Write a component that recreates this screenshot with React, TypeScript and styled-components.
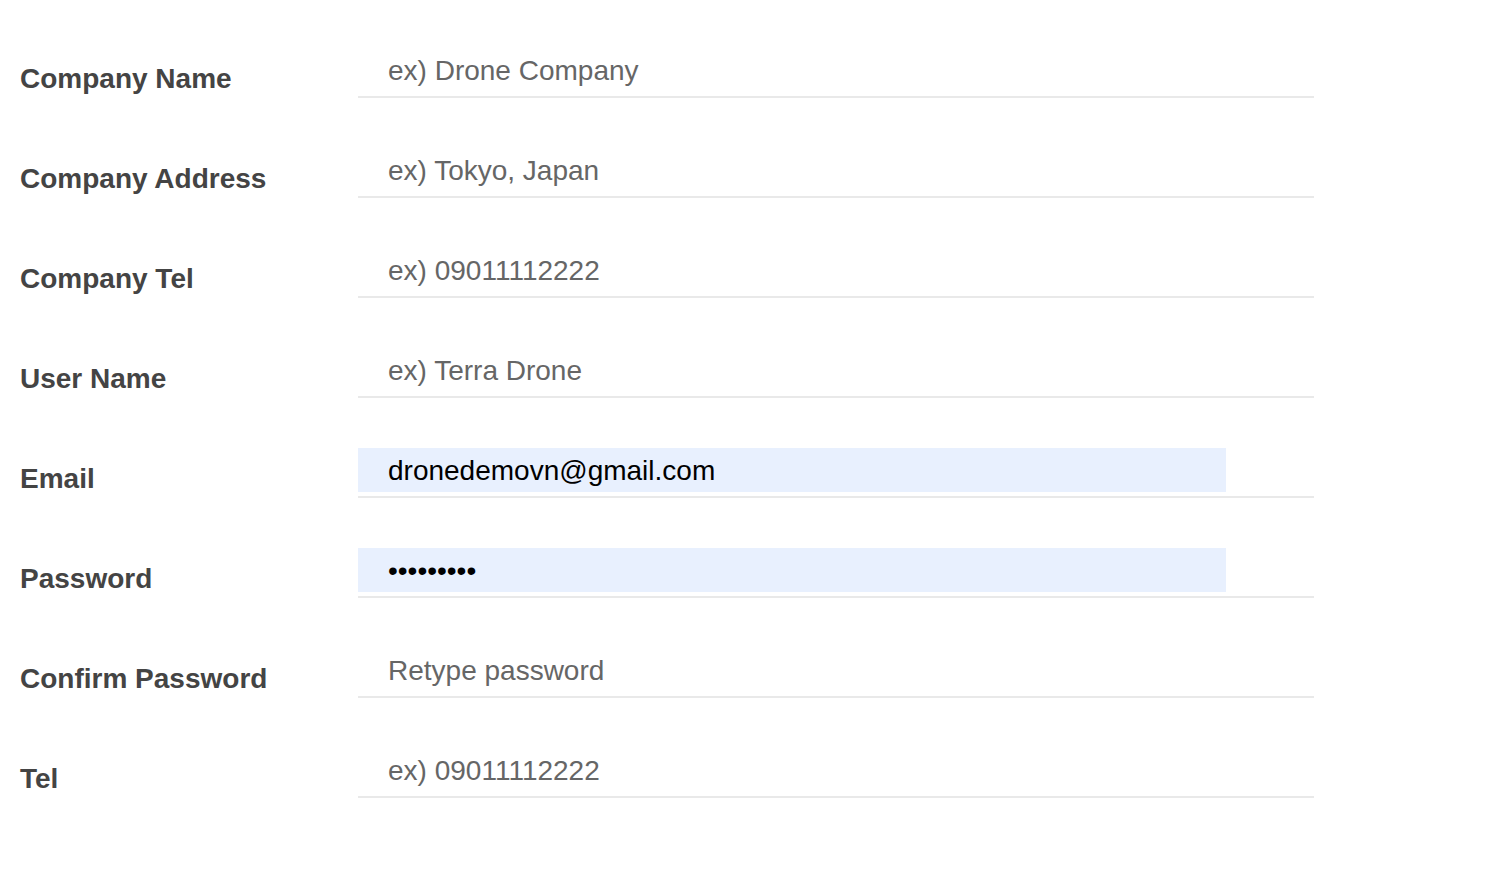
import React, { ReactElement } from 'react';
import styled, { createGlobalStyle } from 'styled-components';

const GlobalStyle = createGlobalStyle`
  html, body {
    margin: 0;
    padding: 0;
    background: #ffffff;
  }
  body {
    font-family: "Liberation Sans", Arial, sans-serif;
  }
`;

interface Field {
  label: string;
  type?: string;
  placeholder?: string;
  value?: string;
}

const fields: Field[] = [
  { label: 'Company Name', placeholder: 'ex) Drone Company' },
  { label: 'Company Address', placeholder: 'ex) Tokyo, Japan' },
  { label: 'Company Tel', placeholder: 'ex) 09011112222' },
  { label: 'User Name', placeholder: 'ex) Terra Drone' },
  { label: 'Email', type: 'email', value: 'dronedemovn@gmail.com' },
  { label: 'Password', type: 'password', value: 'password1' },
  { label: 'Confirm Password', type: 'password', placeholder: 'Retype password' },
  { label: 'Tel', placeholder: 'ex) 09011112222' },
];

function App(): ReactElement {
  return (
    <>
      <GlobalStyle />
      <Form>
        {fields.map((f) => (
          <Row key={f.label}>
            <Label>{f.label}</Label>
            <InputWrap>
              <Input
                type={f.type || 'text'}
                placeholder={f.placeholder}
                defaultValue={f.value}
                $filled={!!f.value}
              />
            </InputWrap>
          </Row>
        ))}
      </Form>
    </>
  );
}

export default App;

const Form = styled.form`
  padding-left: 20px;
  width: 1294px;
`;

const Row = styled.div`
  display: grid;
  grid-template-columns: 338px 956px;
  height: 100px;
`;

const Label = styled.label`
  padding-top: 63px;
  font-size: 28px;
  line-height: 32px;
  font-weight: 700;
  color: #444444;
`;

const InputWrap = styled.div`
  margin-top: 48px;
  height: 48px;
  border-bottom: 2px solid #e9e9e9;
`;

const Input = styled.input<{ $filled?: boolean }>`
  box-sizing: border-box;
  display: block;
  width: 868px;
  height: 44px;
  padding: 2px 0 0 30px;
  margin: 0;
  border: none;
  outline: none;
  font-family: "Liberation Sans", Arial, sans-serif;
  font-size: 28px;
  color: #000000;
  background: ${(p) => (p.$filled ? '#e8f0fe' : 'transparent')};

  &::placeholder {
    color: #666666;
  }
`;
